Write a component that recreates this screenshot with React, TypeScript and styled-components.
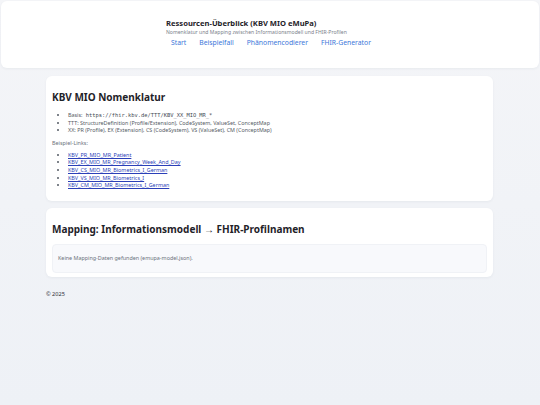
import React from 'react';
import styled, { createGlobalStyle } from 'styled-components';

const GlobalStyle = createGlobalStyle`
  html, body {
    margin: 0;
    padding: 0;
  }

  body {
    min-height: 100vh;
    font-family: 'Noto Sans', 'Open Sans', sans-serif;
    color: #1f2329;
    background: linear-gradient(180deg, #f4f5f8 0%, #eef1f6 100%);
  }
`;

const nomenklatur = [
  { label: 'Basis:', mono: 'https://fhir.kbv.de/TTT/KBV_XX_MIO_MR_*' },
  { label: 'TTT: StructureDefinition (Profile/Extension), CodeSystem, ValueSet, ConceptMap' },
  { label: 'XX: PR (Profile), EX (Extension), CS (CodeSystem), VS (ValueSet), CM (ConceptMap)' },
];

const beispielLinks = [
  'KBV_PR_MIO_MR_Patient',
  'KBV_EX_MIO_MR_Pregnancy_Week_And_Day',
  'KBV_CS_MIO_MR_Biometrics_I_German',
  'KBV_VS_MIO_MR_Biometrics_I',
  'KBV_CM_MIO_MR_Biometrics_I_German',
];

const navItems = ['Start', 'Beispielfall', 'Phänomencodierer', 'FHIR-Generator'];

function App() {
  return (
    <>
      <GlobalStyle />
      <Page>
        <Header>
          <HeaderInner>
            <Title>Ressourcen-Überblick (KBV MIO eMuPa)</Title>
            <Subtitle>Nomenklatur und Mapping zwischen Informationsmodell und FHIR-Profilen</Subtitle>
            <Nav>
              {navItems.map((item) => (
                <NavLink key={item} href="#">
                  {item}
                </NavLink>
              ))}
            </Nav>
          </HeaderInner>
        </Header>

        <Main>
          <Card>
            <CardTitle>KBV MIO Nomenklatur</CardTitle>
            <List>
              {nomenklatur.map((item) => (
                <ListItem key={item.label}>
                  {item.label}
                  {item.mono && <Mono> {item.mono}</Mono>}
                </ListItem>
              ))}
            </List>
            <Label>Beispiel-Links:</Label>
            <List $last>
              {beispielLinks.map((link) => (
                <ListItem key={link}>
                  <ProfileLink href="#">{link}</ProfileLink>
                </ListItem>
              ))}
            </List>
          </Card>

          <Card>
            <CardTitle>Mapping: Informationsmodell → FHIR-Profilnamen</CardTitle>
            <EmptyBox>Keine Mapping-Daten gefunden (emupa-model.json).</EmptyBox>
          </Card>
        </Main>

        <Footer>© 2025</Footer>
      </Page>
    </>
  );
}
export default App;

const Page = styled.div`
  display: flex;
  flex-direction: column;
  padding: 1px;
`;

const Header = styled.header`
  display: flex;
  justify-content: center;

  height: 67px;
  box-sizing: border-box;
  padding-top: 17px;

  background: #ffffff;
  border-radius: 6px;
  box-shadow: 0 1px 3px rgba(20, 30, 60, 0.05);
`;

const HeaderInner = styled.div`
  display: flex;
  flex-direction: column;
  width: 208px;
`;

const Title = styled.h1`
  margin: 0;
  font-size: 7.6px;
  font-weight: 700;
  line-height: 11px;
  color: #1f2329;
`;

const Subtitle = styled.p`
  margin: 0;
  font-size: 5.1px;
  line-height: 6px;
  color: #7a808a;
  white-space: nowrap;
`;

const Nav = styled.nav`
  display: flex;
  column-gap: 3px;
  margin-top: 1px;
`;

const NavLink = styled.a`
  padding: 2px 5px;
  font-size: 6.8px;
  line-height: 10px;
  color: #3b76d9;
  text-decoration: none;
  white-space: nowrap;
`;

const Main = styled.main`
  display: flex;
  flex-direction: column;
  row-gap: 7px;

  width: 447px;
  margin: 8px 0 0 45px;
`;

const Card = styled.section`
  padding: 6px 6px 4px;

  background: #ffffff;
  border-radius: 6px;
  box-shadow: 0 1px 3px rgba(20, 30, 60, 0.05);
`;

const CardTitle = styled.h2`
  margin: 8px 0 8px;
  font-size: 10px;
  font-weight: 700;
  line-height: 14px;
  color: #1f2329;
`;

const List = styled.ul<{ $last?: boolean }>`
  margin: 0 0 ${({ $last }) => ($last ? '7px' : '5px')};
  padding-left: 16px;
  font-size: 5.4px;
  line-height: 7.6px;
  color: #555b65;
`;

const ListItem = styled.li``;

const Mono = styled.code`
  font-family: 'DejaVu Sans Mono', 'Liberation Mono', monospace;
  font-size: 5.4px;
  color: #444a54;
`;

const Label = styled.p`
  margin: 0 0 5px;
  font-size: 5.4px;
  line-height: 7px;
  color: #6b717b;
`;

const ProfileLink = styled.a`
  color: #2b3fb8;
  text-decoration: underline;
`;

const EmptyBox = styled.div`
  padding: 10px 5px;

  font-size: 5.4px;
  line-height: 7px;
  color: #6b717b;

  background: #f8f9fc;
  border: 1px solid #f0f2f6;
  border-radius: 4px;
`;

const Footer = styled.footer`
  margin: 14px 0 0 45px;
  font-size: 5.6px;
  line-height: 7px;
  color: #2b2f36;
`;
